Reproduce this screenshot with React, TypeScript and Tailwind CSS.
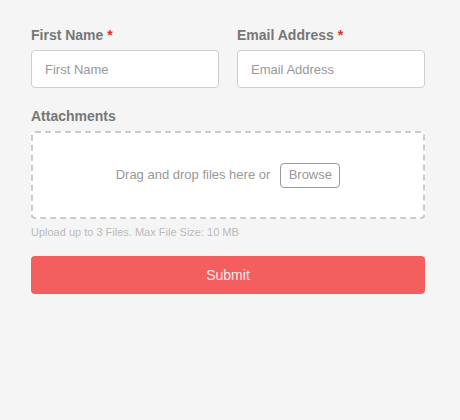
import React from "react";

export default function App() {
  return (
    <div className="min-h-[420px] w-[460px] bg-[#f5f5f5] pl-[31px] pt-[25px]" style={{ fontFamily: '"Liberation Sans", Arial, sans-serif' }}>
      <div className="w-[394px]">
        <div className="flex gap-[18px]">
          <div className="flex-1">
            <div className="mb-[5px] h-[20px] text-[14px] font-bold leading-[20px] text-[#777]">
              First Name <span className="text-[#d9302c]">*</span>
            </div>
            <input
              placeholder="First Name"
              className="h-[38px] w-full rounded-[4px] border border-[#cfcfcf] bg-white px-[13px] text-[13px] text-[#555] outline-none placeholder:text-[#999]"
            />
          </div>
          <div className="flex-1">
            <div className="mb-[5px] h-[20px] text-[14px] font-bold leading-[20px] text-[#777]">
              Email Address <span className="text-[#d9302c]">*</span>
            </div>
            <input
              placeholder="Email Address"
              className="h-[38px] w-full rounded-[4px] border border-[#cfcfcf] bg-white px-[13px] text-[13px] text-[#555] outline-none placeholder:text-[#999]"
            />
          </div>
        </div>
        <div className="mt-[18px] mb-[5px] h-[20px] text-[14px] font-bold leading-[20px] text-[#777]">Attachments</div>
        <div className="flex h-[88px] items-center justify-center gap-[10px] rounded-[4px] border-2 border-dashed border-[#cccccc] bg-white">
          <span className="text-[13px] text-[#999]">Drag and drop files here or</span>
          <span className="flex h-[25px] w-[60px] items-center justify-center rounded-[4px] border border-[#999] text-[13px] text-[#999]">Browse</span>
        </div>
        <div className="mt-[6px] h-[14px] text-[11px] leading-[14px] text-[#bbb]">Upload up to 3 Files. Max File Size: 10 MB</div>
        <button className="mt-[17px] flex h-[38px] w-full items-center justify-center rounded-[4px] bg-[#f35f5f] text-[14px] text-[#fde9e9]">
          Submit
        </button>
      </div>
    </div>
  );
}
